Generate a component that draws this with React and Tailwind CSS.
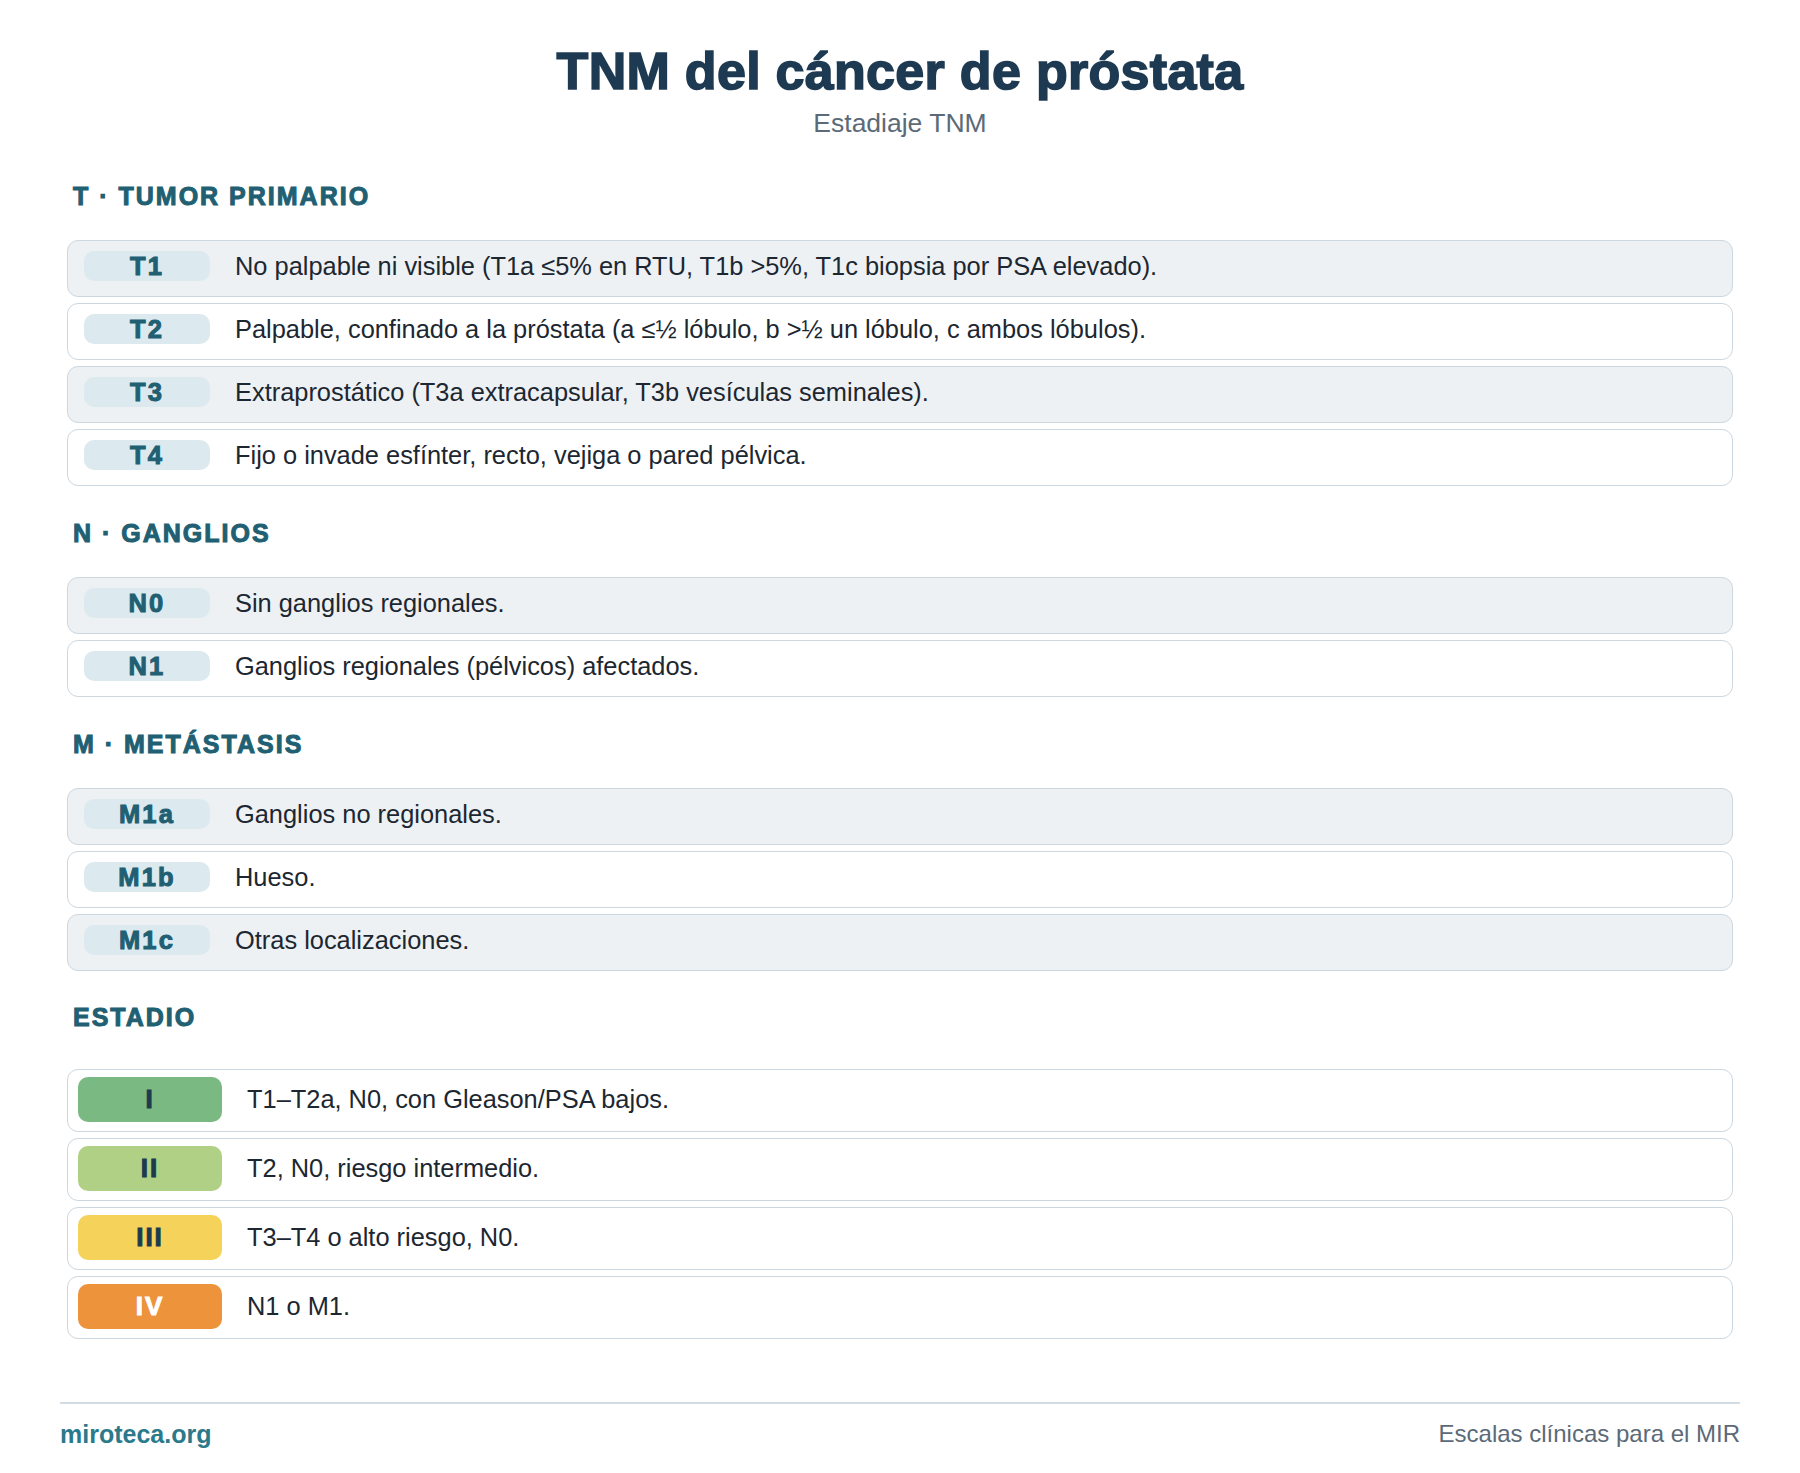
import React from "react";

const sections = [
  {
    title: "T · TUMOR PRIMARIO",
    rows: [
      ["T1", "No palpable ni visible (T1a ≤5% en RTU, T1b >5%, T1c biopsia por PSA elevado)."],
      ["T2", "Palpable, confinado a la próstata (a ≤½ lóbulo, b >½ un lóbulo, c ambos lóbulos)."],
      ["T3", "Extraprostático (T3a extracapsular, T3b vesículas seminales)."],
      ["T4", "Fijo o invade esfínter, recto, vejiga o pared pélvica."],
    ],
  },
  {
    title: "N · GANGLIOS",
    rows: [
      ["N0", "Sin ganglios regionales."],
      ["N1", "Ganglios regionales (pélvicos) afectados."],
    ],
  },
  {
    title: "M · METÁSTASIS",
    rows: [
      ["M1a", "Ganglios no regionales."],
      ["M1b", "Hueso."],
      ["M1c", "Otras localizaciones."],
    ],
  },
];

const stages = [
  ["I", "T1–T2a, N0, con Gleason/PSA bajos.", "bg-[#7bb982] text-[#1d3a4f]"],
  ["II", "T2, N0, riesgo intermedio.", "bg-[#b0d185] text-[#1d3a4f]"],
  ["III", "T3–T4 o alto riesgo, N0.", "bg-[#f5d35a] text-[#1d3a4f]"],
  ["IV", "N1 o M1.", "bg-[#ec933c] text-white"],
];

function Heading({ children }) {
  return (
    <h2 className="pl-[6px] text-[25px] leading-[28px] font-bold tracking-[2px] text-[#215f72] [-webkit-text-stroke:1px_#215f72]">
      {children}
    </h2>
  );
}

export default function App() {
  return (
    <div className="min-h-[1473px] bg-white font-['Liberation_Sans',Arial,sans-serif] text-[#1c2731]">
      <div className="px-[60px]">
        <header className="pt-[40px] flex flex-col items-center">
          <h1 className="text-[52px] leading-[62px] font-bold text-[#1d3a52] tracking-[0.3px] [-webkit-text-stroke:1.6px_#1d3a52]">
            TNM del cáncer de próstata
          </h1>
          <p className="mt-[6px] text-[26.5px] leading-[30px] text-[#5b6a78]">Estadiaje TNM</p>
        </header>

        <main className="px-[7px] pt-[44px]">
          {sections.map((s, si) => (
            <section key={s.title} className={si > 0 ? "mt-[33px]" : ""}>
              <Heading>{s.title}</Heading>
              <div className="mt-[30px] flex flex-col gap-[6px]">
                {s.rows.map(([code, text], i) => (
                  <div
                    key={code}
                    className={
                      "h-[57px] flex items-center rounded-[11px] border border-[#cdd7df] pl-[16px] pb-[5px] " +
                      (i % 2 === 0 ? "bg-[#edf1f4]" : "bg-white")
                    }
                  >
                    <div className="w-[126px] h-[30px] shrink-0 rounded-[10px] bg-[#dceaf0] flex items-center justify-center text-[25.5px] font-bold tracking-[2.2px] text-[#215f72] [-webkit-text-stroke:1px_#215f72]">
                      {code}
                    </div>
                    <div className="ml-[25px] text-[25.4px] leading-[30px]">{text}</div>
                  </div>
                ))}
              </div>
            </section>
          ))}

          <section className="mt-[32px]">
            <Heading>ESTADIO</Heading>
            <div className="mt-[38px] flex flex-col gap-[6px]">
              {stages.map(([code, text, cls]) => (
                <div
                  key={code}
                  className="h-[63px] flex items-center rounded-[11px] border border-[#cdd7df] bg-white pl-[10px] pb-[3px]"
                >
                  <div
                    className={
                      "w-[144px] h-[45px] shrink-0 rounded-[10px] flex items-center justify-center text-[26px] font-bold tracking-[2px] [-webkit-text-stroke:1px_currentcolor] " +
                      cls
                    }
                  >
                    {code}
                  </div>
                  <div className="ml-[25px] text-[25.4px] leading-[30px]">{text}</div>
                </div>
              ))}
            </div>
          </section>
        </main>

        <footer className="mt-[63px] border-t-2 border-[#d3dce3] pt-[16px] flex items-center justify-between">
          <span className="text-[25px] leading-[28px] font-bold text-[#2a7a8c]">miroteca.org</span>
          <span className="text-[24px] leading-[28px] text-[#5b6a78]">Escalas clínicas para el MIR</span>
        </footer>
      </div>
    </div>
  );
}
